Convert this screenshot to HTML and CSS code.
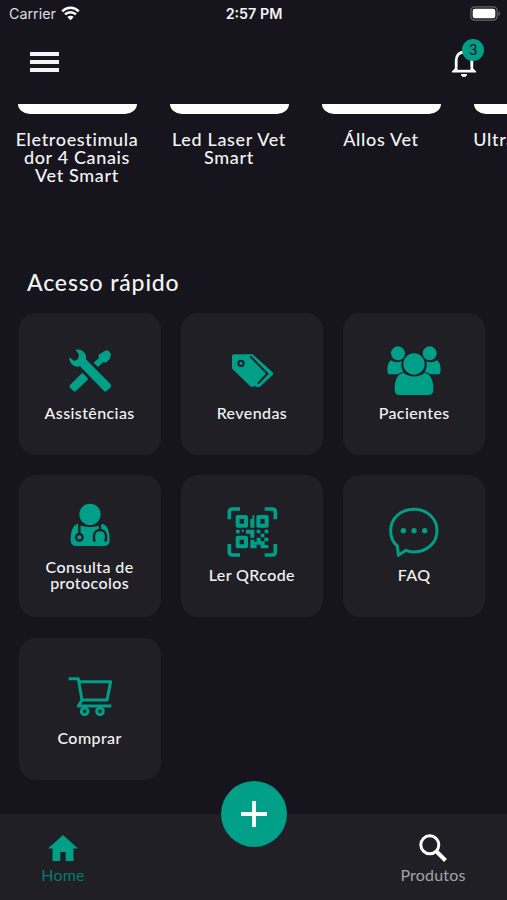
FILE: index.html
```html
<!DOCTYPE html>
<html lang="pt-BR">
<head>
    <meta charset="UTF-8">
    <meta name="viewport" content="width=device-width, initial-scale=1.0">
    <title>Vet Smart</title>
    <link rel="stylesheet" href="styles.css">
</head>
<body>

    <div class="status-bar">
        <div class="carrier">
            <span>Carrier</span>
            <svg width="19" height="15" viewBox="0 0 19 15" fill="none" stroke="#fff" stroke-width="2.5">
                <path d="M1.2 5.3C6 .7 13 .7 17.8 5.3"/>
                <path d="M4 8.4c3.2-3 7.800-3 11 0"/>
                <path d="M9.500 14.200L6.300 11c1.800-1.700 4.600-1.700 6.400 0z" fill="#fff" stroke="none"/>
            </svg>
        </div>
        <div class="time">2:57 PM</div>
        <div class="battery">
            <svg width="31" height="15" viewBox="0 0 31 15">
                <rect x=".8" y=".8" width="26.400" height="13.400" rx="4" fill="none" stroke="#66656c" stroke-width="1.200"/>
                <rect x="2.700" y="2.700" width="22.600" height="9.600" rx="2.200" fill="#fff"/>
                <path d="M28.500 5.200c2 .8 2 3.800 0 4.600z" fill="#66656c"/>
            </svg>
        </div>
    </div>

    <header class="header">
        <button class="menu-button" aria-label="Menu">
            <span></span>
            <span></span>
            <span></span>
        </button>
        <button class="bell-button" aria-label="Notificações">
            <svg width="26" height="32" viewBox="0 0 26 32">
                <path d="M5.200 25V14.500C5.200 9 8.500 6 13 6s7.800 3 7.800 8.500V25" fill="none" stroke="#fff" stroke-width="2.800"/>
                <path d="M13 2.800a2 2 0 0 1 2 2V7h-4V4.800a2 2 0 0 1 2-2z" fill="#fff"/>
                <path d="M.8 26.600v-1.200l3-3h18.400l3 3v1.200zM10 28h6a3 3 0 0 1-6 0z" fill="#fff"/>
                <path d="M6.600 21.500h12.800v2.300H6.600z" fill="#16141d"/>
            </svg>
            <span class="badge">3</span>
        </button>
    </header>

    <div class="products">
        <div class="product">
            <div class="product-img"></div>
            <p>Eletroestimula<br>dor 4 Canais<br>Vet Smart</p>
        </div>
        <div class="product">
            <div class="product-img"></div>
            <p>Led Laser Vet<br>Smart</p>
        </div>
        <div class="product">
            <div class="product-img"></div>
            <p>Állos Vet</p>
        </div>
        <div class="product">
            <div class="product-img"></div>
            <p>Ultrassom Vet</p>
        </div>
    </div>

    <h2>Acesso rápido</h2>

    <div class="board">
        <button class="tile">
            <svg class="icon" viewBox="0 0 162 162">
                <path d="M38 20C57 16 73 32 69 49L143 124Q147 129 143 133L131 144Q127 147 123 144L51 70C34 75 18 62 19 43L34 54L45 48L48 35z"/>
                <path d="M21 126L54 93Q58 89 62 93L73 104Q77 108 73 112L39 144Q35 147 31 144L21 134Q17 130 21 126z"/>
                <path d="M126 23L135 22L144 33L140 48L129 59L121 57L105 72L92 59L107 46L107 35z"/>
            </svg>
            <span>Assistências</span>
        </button>
        <button class="tile">
            <svg class="icon" viewBox="0 0 162 162">
                <path d="M26 34H83L143 88Q146 92 143 96L104 132L94 132L88 128L82 133L76 130L23 79Q21 77 21 73V39Q21 34 26 34z"/>
                <path class="cut" d="M76 40L127 92L99 122" stroke-width="6"/>
                <circle class="cut" cx="48" cy="61" r="8" stroke-width="6"/>
            </svg>
            <span>Revendas</span>
        </button>
        <button class="tile">
            <svg class="icon" viewBox="0 0 162 162">
                <circle cx="33" cy="31" r="21"/>
                <circle cx="128" cy="31" r="21"/>
                <circle cx="81" cy="63" r="32"/>
                <path d="M49 89C27 94 23 118 23 140Q23 156 38 156H124Q139 156 139 140C139 118 135 94 113 89C95 104 67 104 49 89z"/>
                <path d="M12 52Q1 58 1 83Q1 94 10 94H32Q38 89 49 86C43 77 41 66 44 54C34 60 22 59 12 52z"/>
                <path d="M150 52Q161 58 161 83Q161 94 152 94H130Q124 89 113 86C119 77 121 66 118 54C128 60 140 59 150 52z"/>
            </svg>
            <span>Pacientes</span>
        </button>
        <button class="tile">
            <svg class="icon" viewBox="0 -3 162 162">
                <circle cx="81" cy="49" r="32"/>
                <path d="M44 77C57 90 105 90 118 77C136 82 140 105 140 126Q140 144 122 144H41Q23 144 23 126C23 105 27 82 44 77z"/>
                <path class="cut" d="M49 76V108M111 76V94M98 127H93V114C93 90 129 90 129 114V127H124" stroke-width="7"/>
                <circle class="cut" cx="49" cy="118" r="10" stroke-width="7"/>
            </svg>
            <span>Consulta de<br>protocolos</span>
        </button>
        <button class="tile">
            <svg class="icon" viewBox="0 0 162 162">
                <path class="line" d="M13 43V21Q13 12 22 12H45M119 12H142Q151 12 151 21V43M13 117V141Q13 150 22 150H45M119 150H142Q151 150 151 141V117" stroke-width="11"/>
                <path class="line" d="M38 36H63V62H38zM100 36H125V62H100zM38 98H63V124H38z" stroke-width="12"/>
                <path d="M76 42H88V68H76zM82 31H88V42H82zM33 74H44V85H33zM50 74H57V80H50zM63 74H88V98H76V86H63zM95 74H106V85H95zM119 74H130V85H119zM107 86H118V97H107zM95 98H107V109H118V98H130V109H119V120H130V130H107V119H95V130H88V120H95zM76 104H88V110H95V119H88V130H76z"/>
            </svg>
            <span>Ler QRcode</span>
        </button>
        <button class="tile">
            <svg class="icon" viewBox="0 -2 162 162">
                <path class="line" d="M34 149L31 121C17 109 11 93 11 75C11 37 42 11 81 11C121 11 150 39 150 75C150 112 119 139 81 139C72 139 64 137 57 134z" stroke-width="9"/>
                <circle cx="49" cy="75" r="8"/>
                <circle cx="81" cy="75" r="8"/>
                <circle cx="113" cy="75" r="8"/>
            </svg>
            <span>FAQ</span>
        </button>
        <button class="tile">
            <svg class="icon" viewBox="0 0 162 162">
                <path class="line" d="M17 32H46L57 96H132L143 41H48M57 96L46 114H145" stroke-width="9"/>
                <circle class="line" cx="65" cy="130" r="10" stroke-width="9"/>
                <circle class="line" cx="111" cy="130" r="10" stroke-width="9"/>
            </svg>
            <span>Comprar</span>
        </button>
    </div>

    <nav class="tab-bar">
        <a class="tab active">
            <svg width="30" height="26" viewBox="0 0 30 26"><path d="M15 0l15 13.500h-4.500V26h-7.800v-9h-5.400v9H4.500V13.500H0z" fill="#009f88"/></svg>
            <span>Home</span>
        </a>
        <a class="tab">
            <svg width="28" height="28" viewBox="0 0 28 28" fill="none" stroke="#fff">
                <circle cx="10.800" cy="10.800" r="9" stroke-width="3"/>
                <path d="M17 17l9.500 9.500" stroke-width="4"/>
            </svg>
            <span>Produtos</span>
        </a>
        <button class="add-button" aria-label="Adicionar">
            <svg width="26" height="26" viewBox="0 0 26 26"><path d="M13 0v26M0 13h26" stroke="#fff" stroke-width="3.800"/></svg>
        </button>
    </nav>

</body>
</html>
```
FILE: styles.css
```css
* {
    box-sizing: border-box;
}

body {
    font-family: Lato, sans-serif;
    background-color: #16141d;
    color: #f4f4f5;
    margin: 0;
    height: 900px;
    overflow: hidden;
    display: flex;
    flex-direction: column;
}

button {
    font-family: inherit;
    color: inherit;
    border: none;
    padding: 0;
    background: none;
    cursor: pointer;
}

.status-bar {
    height: 27px;
    padding: 0 6px 0 9px;
    display: grid;
    grid-template-columns: 1fr auto 1fr;
    align-items: center;
    font-family: Inter, sans-serif;
    font-size: 14.3px;
}

.carrier {
    display: flex;
    align-items: center;
    gap: 5px;
    color: #dddde0;
}

.time {
    font-weight: 600;
    margin-right: 2px;
}

.battery {
    display: flex;
    justify-content: flex-end;
}

.header {
    height: 77px;
    padding: 19px 30px 0 30px;
    display: flex;
    justify-content: space-between;
    align-items: flex-start;
}

.menu-button {
    width: 29px;
    margin-top: 6px;
    display: flex;
    flex-direction: column;
    gap: 4px;
}

.menu-button span {
    width: 100%;
    height: 4px;
    background-color: #f4f4f5;
}

.bell-button {
    position: relative;
    height: 32px;
}

.badge {
    position: absolute;
    top: -7px;
    left: 11px;
    width: 22px;
    height: 22px;
    line-height: 21px;
    border-radius: 50%;
    background-color: #009f88;
    color: #16141d;
    font-size: 15px;
}

.products {
    height: 164px;
    padding-left: 11px;
    overflow: hidden;
    display: flex;
    gap: 20px;
}

.product {
    flex: 0 0 132px;
    text-align: center;
}

.product-img {
    width: 119px;
    height: 10px;
    margin: 0 auto;
    background-color: #fff;
    border-radius: 0 0 12px 12px / 0 0 10px 10px;
}

.product p {
    margin: 16px 0 0;
    font-size: 18px;
    line-height: 18px;
    font-weight: 500;
    letter-spacing: 0.65px;
}

h2 {
    margin: 0 0 0 27px;
    height: 45px;
    font-size: 23px;
    line-height: 28px;
    font-weight: 500;
    letter-spacing: 0.85px;
}

.board {
    display: grid;
    grid-template-columns: repeat(3, 142px);
    grid-auto-rows: 142px;
    gap: 20.3px;
    padding-left: 18.6px;
}

.tile {
    background-color: #201f26;
    border-radius: 17px;
    padding-bottom: 4px;
    display: flex;
    flex-direction: column;
    align-items: center;
    justify-content: center;
    gap: 8px;
    font-size: 16px;
    line-height: 16px;
    font-weight: 500;
    letter-spacing: 0.4px;
}

.icon {
    width: 54px;
    height: 54px;
    fill: #009f88;
}

.icon .line {
    fill: none;
    stroke: #009f88;
    stroke-linejoin: round;
}

.icon .cut {
    fill: none;
    stroke: #201f26;
}

.tab-bar {
    position: relative;
    height: 86px;
    margin-top: auto;
    padding: 20px 31px 0;
    background-color: #201f26;
    display: flex;
    justify-content: space-between;
}

.tab {
    width: 64px;
    display: flex;
    flex-direction: column;
    align-items: center;
    font-size: 16px;
    line-height: 20px;
    letter-spacing: 0.2px;
    color: #a5a4a9;
}

.tab:nth-child(2) {
    width: 86px;
}

.tab svg {
    height: 28px;
    margin-bottom: 3px;
}

.tab.active {
    color: #047a6b;
}

/* sits half above the tab bar */
.add-button {
    position: absolute;
    top: -33px;
    left: 50%;
    width: 66px;
    height: 66px;
    margin-left: -33px;
    border-radius: 50%;
    background-color: #009f88;
    display: flex;
    align-items: center;
    justify-content: center;
}
```
